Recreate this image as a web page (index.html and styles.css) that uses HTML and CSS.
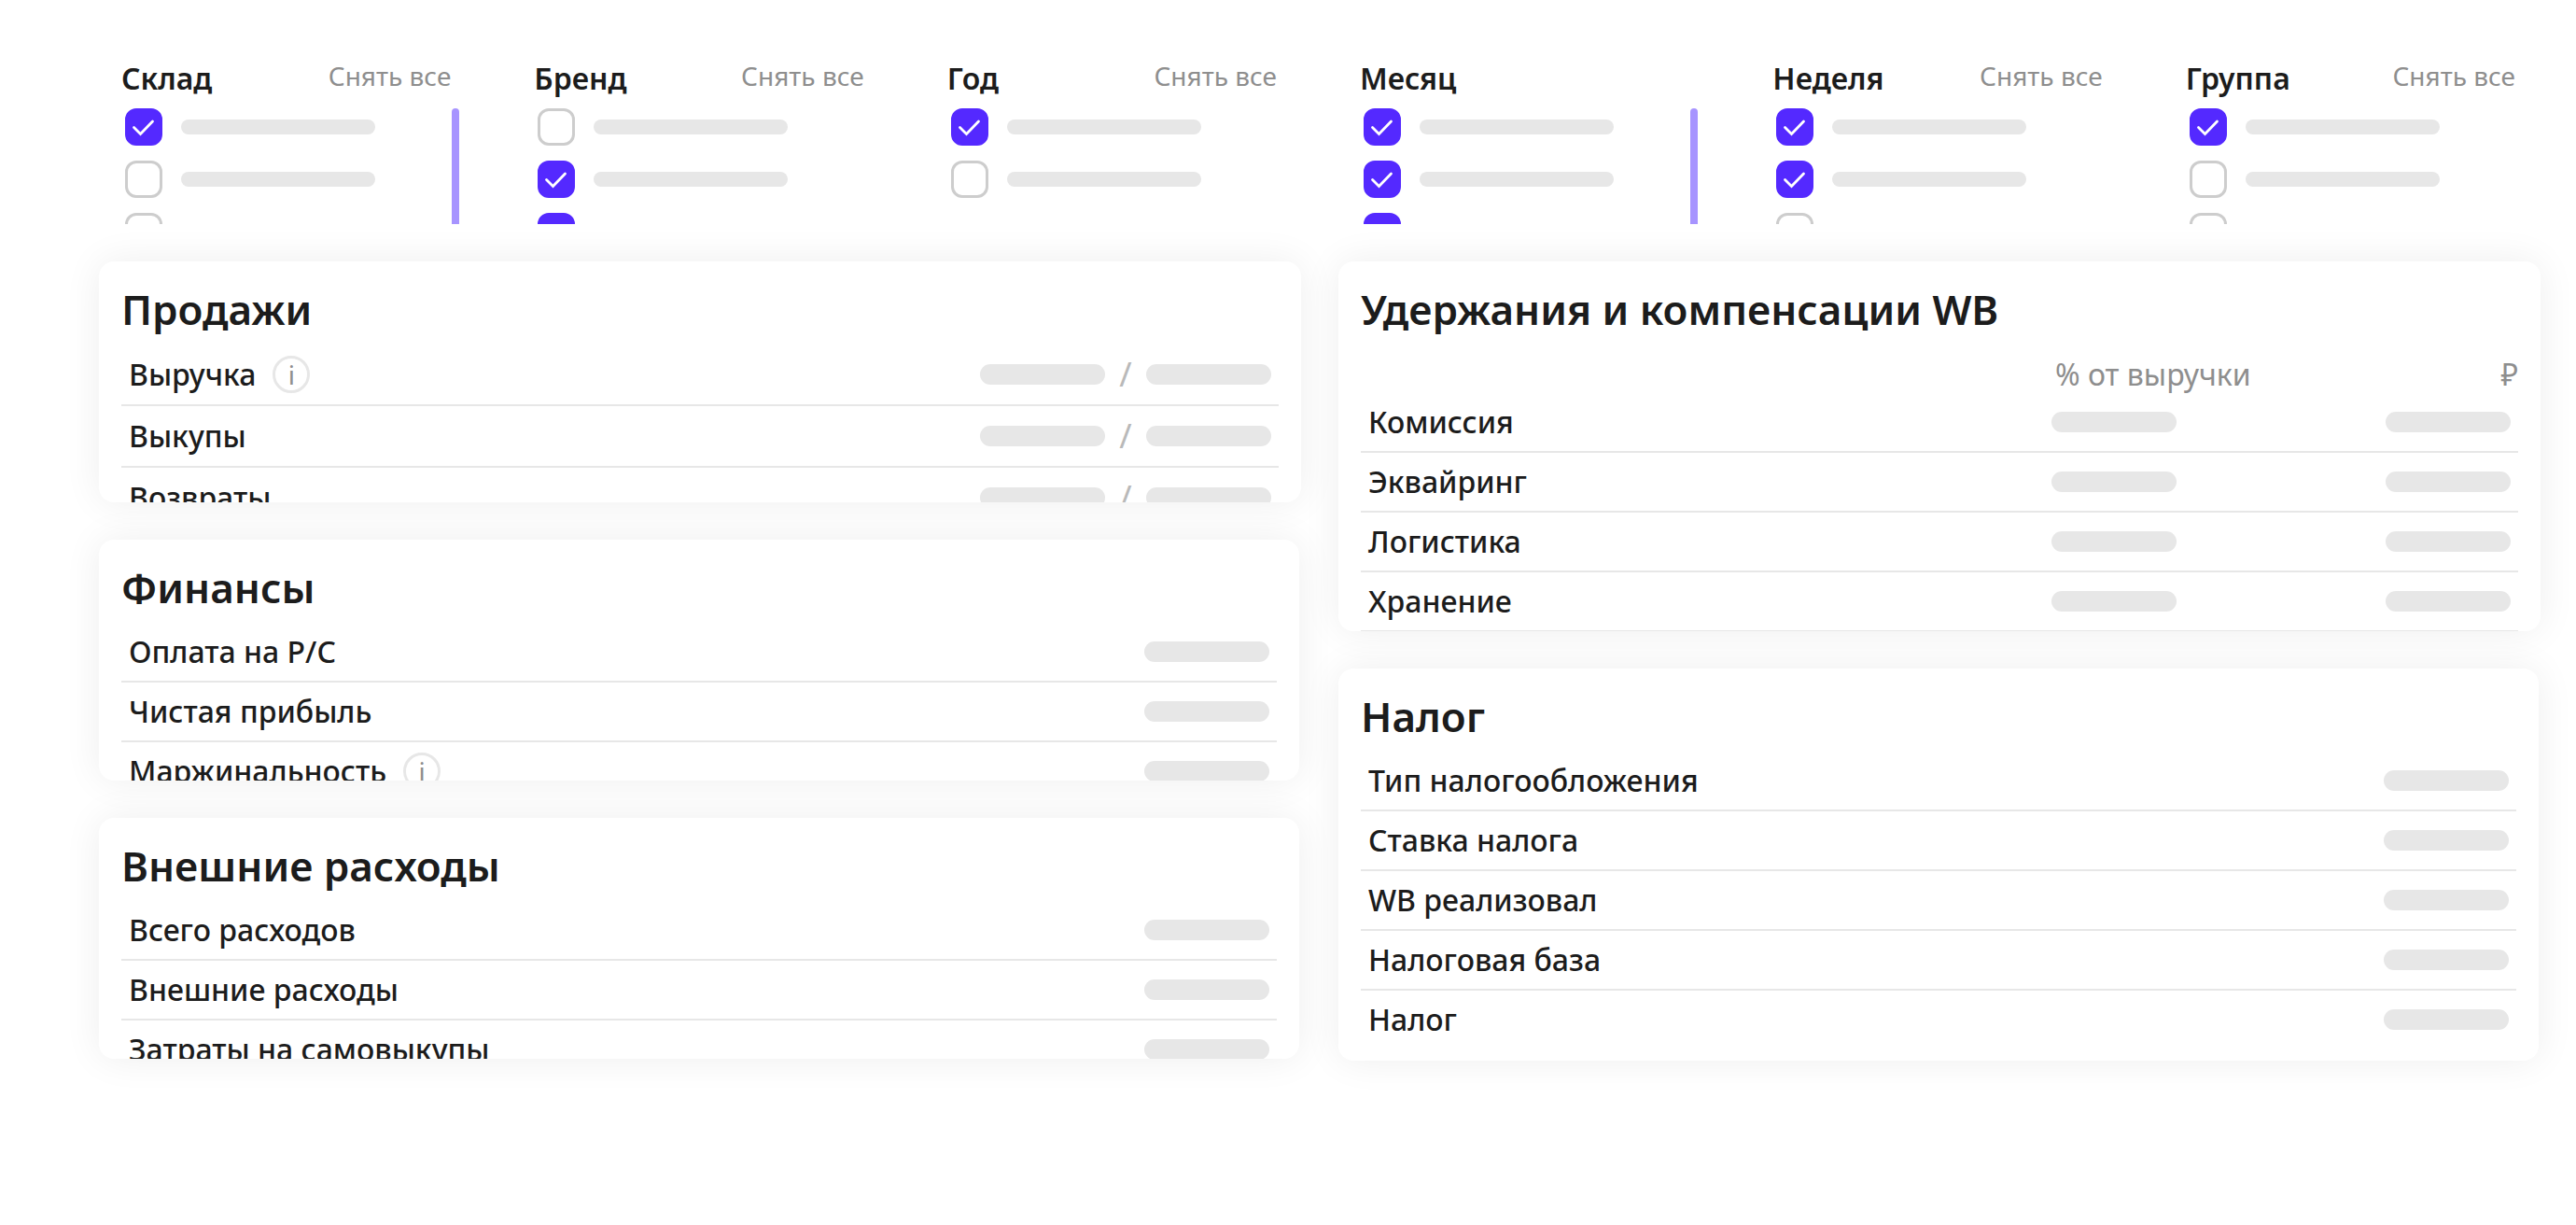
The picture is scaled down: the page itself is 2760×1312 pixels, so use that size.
FILE: index.html
```html
<!DOCTYPE html>
<html lang="ru">
<head>
<meta charset="utf-8">
<meta name="viewport" content="width=device-width, initial-scale=1">
<title>Сводка</title>
<link rel="stylesheet" href="styles.css">
</head>
<body>
<svg class="sprite" aria-hidden="true">
  <symbol id="tick" viewBox="0 0 40 40"><path d="M9.5 20.5 16.5 27.5 29.5 14" fill="none" stroke="#fff" stroke-width="2.8" stroke-linecap="round" stroke-linejoin="miter"/></symbol>
</svg>
<main class="page">
  <section class="filters" aria-label="Фильтры">
    <fieldset class="filter">
      <div class="filter-head"><h3 class="filter-title">Склад</h3><button class="reset" type="button">Снять все</button></div>
      <div class="filter-body">
        <div class="filter-list">
          <label class="option"><span class="check"><input type="checkbox" aria-label="Склад 1" checked><svg><use href="#tick"/></svg></span><span class="option-bar"></span></label>
          <label class="option"><span class="check"><input type="checkbox" aria-label="Склад 2"><svg><use href="#tick"/></svg></span><span class="option-bar"></span></label>
          <label class="option"><span class="check"><input type="checkbox" aria-label="Склад 3"><svg><use href="#tick"/></svg></span><span class="option-bar"></span></label>
        </div>
        <span class="scroll-thumb"></span>
      </div>
    </fieldset>
    <fieldset class="filter">
      <div class="filter-head"><h3 class="filter-title">Бренд</h3><button class="reset" type="button">Снять все</button></div>
      <div class="filter-body">
        <div class="filter-list">
          <label class="option"><span class="check"><input type="checkbox" aria-label="Бренд 1"><svg><use href="#tick"/></svg></span><span class="option-bar"></span></label>
          <label class="option"><span class="check"><input type="checkbox" aria-label="Бренд 2" checked><svg><use href="#tick"/></svg></span><span class="option-bar"></span></label>
          <label class="option"><span class="check"><input type="checkbox" aria-label="Бренд 3" checked><svg><use href="#tick"/></svg></span><span class="option-bar"></span></label>
        </div>
      </div>
    </fieldset>
    <fieldset class="filter">
      <div class="filter-head"><h3 class="filter-title">Год</h3><button class="reset" type="button">Снять все</button></div>
      <div class="filter-body">
        <div class="filter-list">
          <label class="option"><span class="check"><input type="checkbox" aria-label="Год 1" checked><svg><use href="#tick"/></svg></span><span class="option-bar"></span></label>
          <label class="option"><span class="check"><input type="checkbox" aria-label="Год 2"><svg><use href="#tick"/></svg></span><span class="option-bar"></span></label>
        </div>
      </div>
    </fieldset>
    <fieldset class="filter">
      <div class="filter-head"><h3 class="filter-title">Месяц</h3></div>
      <div class="filter-body">
        <div class="filter-list">
          <label class="option"><span class="check"><input type="checkbox" aria-label="Месяц 1" checked><svg><use href="#tick"/></svg></span><span class="option-bar"></span></label>
          <label class="option"><span class="check"><input type="checkbox" aria-label="Месяц 2" checked><svg><use href="#tick"/></svg></span><span class="option-bar"></span></label>
          <label class="option"><span class="check"><input type="checkbox" aria-label="Месяц 3" checked><svg><use href="#tick"/></svg></span><span class="option-bar"></span></label>
        </div>
        <span class="scroll-thumb"></span>
      </div>
    </fieldset>
    <fieldset class="filter">
      <div class="filter-head"><h3 class="filter-title">Неделя</h3><button class="reset" type="button">Снять все</button></div>
      <div class="filter-body">
        <div class="filter-list">
          <label class="option"><span class="check"><input type="checkbox" aria-label="Неделя 1" checked><svg><use href="#tick"/></svg></span><span class="option-bar"></span></label>
          <label class="option"><span class="check"><input type="checkbox" aria-label="Неделя 2" checked><svg><use href="#tick"/></svg></span><span class="option-bar"></span></label>
          <label class="option"><span class="check"><input type="checkbox" aria-label="Неделя 3"><svg><use href="#tick"/></svg></span><span class="option-bar"></span></label>
        </div>
      </div>
    </fieldset>
    <fieldset class="filter">
      <div class="filter-head"><h3 class="filter-title">Группа</h3><button class="reset" type="button">Снять все</button></div>
      <div class="filter-body">
        <div class="filter-list">
          <label class="option"><span class="check"><input type="checkbox" aria-label="Группа 1" checked><svg><use href="#tick"/></svg></span><span class="option-bar"></span></label>
          <label class="option"><span class="check"><input type="checkbox" aria-label="Группа 2"><svg><use href="#tick"/></svg></span><span class="option-bar"></span></label>
          <label class="option"><span class="check"><input type="checkbox" aria-label="Группа 3"><svg><use href="#tick"/></svg></span><span class="option-bar"></span></label>
        </div>
      </div>
    </fieldset>
  </section>

  <div class="board">
    <div class="column">
      <section class="card card-short">
        <h2 class="card-title">Продажи</h2>
        <table class="data data-tall">
          <tr><th scope="row"><span class="name">Выручка <button class="info" type="button">i</button></span></th><td><span class="pair"><span class="bar"></span><span class="slash">/</span><span class="bar"></span></span></td></tr>
          <tr><th scope="row">Выкупы</th><td><span class="pair"><span class="bar"></span><span class="slash">/</span><span class="bar"></span></span></td></tr>
          <tr><th scope="row">Возвраты</th><td><span class="pair"><span class="bar"></span><span class="slash">/</span><span class="bar"></span></span></td></tr>
        </table>
      </section>
      <section class="card card-short card-inset">
        <h2 class="card-title">Финансы</h2>
        <table class="data">
          <tr><th scope="row">Оплата на Р/С</th><td><span class="bar"></span></td></tr>
          <tr><th scope="row">Чистая прибыль</th><td><span class="bar"></span></td></tr>
          <tr><th scope="row"><span class="name">Маржинальность <button class="info" type="button">i</button></span></th><td><span class="bar"></span></td></tr>
        </table>
      </section>
      <section class="card card-short card-inset">
        <h2 class="card-title">Внешние расходы</h2>
        <table class="data">
          <tr><th scope="row">Всего расходов</th><td><span class="bar"></span></td></tr>
          <tr><th scope="row">Внешние расходы</th><td><span class="bar"></span></td></tr>
          <tr><th scope="row">Затраты на самовыкупы</th><td><span class="bar"></span></td></tr>
        </table>
      </section>
    </div>
    <div class="column">
      <section class="card card-medium">
        <h2 class="card-title">Удержания и компенсации WB</h2>
        <table class="data">
          <thead><tr><td></td><th class="share" scope="col">% от выручки</th><th class="sum" scope="col">₽</th></tr></thead>
          <tbody>
            <tr><th scope="row">Комиссия</th><td class="share"><span class="bar"></span></td><td><span class="bar"></span></td></tr>
            <tr><th scope="row">Эквайринг</th><td class="share"><span class="bar"></span></td><td><span class="bar"></span></td></tr>
            <tr><th scope="row">Логистика</th><td class="share"><span class="bar"></span></td><td><span class="bar"></span></td></tr>
            <tr><th scope="row">Хранение</th><td class="share"><span class="bar"></span></td><td><span class="bar"></span></td></tr>
          </tbody>
        </table>
      </section>
      <section class="card card-inset">
        <h2 class="card-title">Налог</h2>
        <table class="data data-open">
          <tr><th scope="row">Тип налогообложения</th><td><span class="bar"></span></td></tr>
          <tr><th scope="row">Ставка налога</th><td><span class="bar"></span></td></tr>
          <tr><th scope="row">WB реализовал</th><td><span class="bar"></span></td></tr>
          <tr><th scope="row">Налоговая база</th><td><span class="bar"></span></td></tr>
          <tr><th scope="row">Налог</th><td><span class="bar"></span></td></tr>
        </table>
      </section>
    </div>
  </div>
</main>
</body>
</html>
```
FILE: styles.css
```css
:root {
  --ink: #1c1c1c;
  --muted: #8e8e8e;
  --line: #e7e7e7;
  --accent: #5429ff;
  --accent-soft: #a794ff;
}

* { box-sizing: border-box; }

body {
  margin: 0;
  background: #fff;
  color: var(--ink);
  font: 500 32px/40px "Noto Sans", "Open Sans", sans-serif;
}

h2, h3, fieldset { margin: 0; padding: 0; border: 0; }

button {
  padding: 0;
  border: 0;
  background: none;
  color: var(--muted);
  font: inherit;
  font-weight: 400;
  cursor: pointer;
}

.sprite { display: none; }

.page { padding: 60px 38px 40px 106px; }

/* Filters */
.filters {
  display: grid;
  grid-template-columns: repeat(6, minmax(0, 1fr));
  gap: 86px;
  padding: 0 24px;
  margin-bottom: 40px;
}

.filter { min-width: 0; }

.filter-head {
  display: flex;
  justify-content: space-between;
  align-items: flex-start;
  height: 48px;
  margin-bottom: 8px;
  padding-right: 3px;
}

.filter-title {
  font-size: 32px;
  font-weight: 600;
  line-height: 48px;
}

.reset {
  font-size: 28px;
  line-height: 42px;
}

.filter-body { position: relative; }

.filter-list {
  display: flex;
  flex-direction: column;
  gap: 16px;
  height: 124px;
  padding-left: 4px;
  overflow: hidden;
}

.scroll-thumb {
  position: absolute;
  top: 0;
  right: -6px;
  width: 8px;
  height: 100%;
  border-radius: 4px 4px 0 0;
  background: var(--accent-soft);
}

.option {
  display: flex;
  flex: none;
  align-items: center;
  gap: 20px;
  cursor: pointer;
}

.option-bar {
  width: 208px;
  height: 16px;
  border-radius: 8px;
  background: var(--line);
}

.check {
  display: grid;
  width: 40px;
  height: 40px;
}

.check input,
.check svg {
  grid-area: 1 / 1;
  width: 40px;
  height: 40px;
  margin: 0;
}

.check input {
  appearance: none;
  border: 3px solid #cdcdcd;
  border-radius: 12px;
}

.check input:checked {
  border-color: var(--accent);
  background: var(--accent);
}

.check svg { visibility: hidden; pointer-events: none; }
.check input:checked + svg { visibility: visible; }

/* Cards */
.board {
  display: grid;
  grid-template-columns: repeat(2, minmax(0, 1fr));
  gap: 40px;
  align-items: start;
}

.column {
  display: flex;
  flex-direction: column;
  gap: 40px;
}

.card {
  padding: 24px 24px 13px;
  border-radius: 16px;
  background: #fff;
  box-shadow: 0 0 40px rgba(0, 0, 0, .07);
  overflow: hidden;
}

.card-short { height: 258px; }
.card-medium { height: 396px; }
.card-inset { margin-right: 2px; }

.card-title {
  margin-bottom: 11px;
  font-size: 44px;
  font-weight: 600;
  line-height: 54px;
}

/* Rows */
.data {
  width: 100%;
  border-spacing: 0;
}

.data th,
.data td {
  height: 64px;
  padding: 0 8px 0 0;
  border-bottom: 2px solid var(--line);
  text-align: right;
  vertical-align: middle;
}

.data th {
  padding-left: 8px;
  font-weight: 500;
  text-align: left;
}

.data-tall th,
.data-tall td { height: 66px; }

.data-open tr:last-child > * {
  height: 62px;
  border-bottom: 0;
}

.data thead > tr > * {
  height: 52px;
  padding-top: 12px;
  border-bottom: 0;
  color: var(--muted);
  font-weight: 400;
}

.data .share {
  width: 350px;
  padding-left: 0;
  text-align: left;
}

.data thead .share { padding-left: 4px; }

.data thead .sum {
  width: 150px;
  padding-right: 0;
  text-align: right;
}

.bar {
  display: block;
  width: 134px;
  height: 22px;
  margin-left: auto;
  border-radius: 11px;
  background: var(--line);
}

.share .bar,
.pair .bar { margin-left: 0; }

.pair {
  display: flex;
  align-items: center;
  justify-content: flex-end;
  color: #b9b9b9;
}

.slash {
  width: 44px;
  font-size: 36px;
  font-weight: 400;
  text-align: center;
}

.name {
  display: flex;
  align-items: center;
  gap: 18px;
}

.info {
  width: 40px;
  height: 40px;
  border: 3px solid var(--line);
  border-radius: 50%;
  font-size: 28px;
  line-height: 34px;
}
```
